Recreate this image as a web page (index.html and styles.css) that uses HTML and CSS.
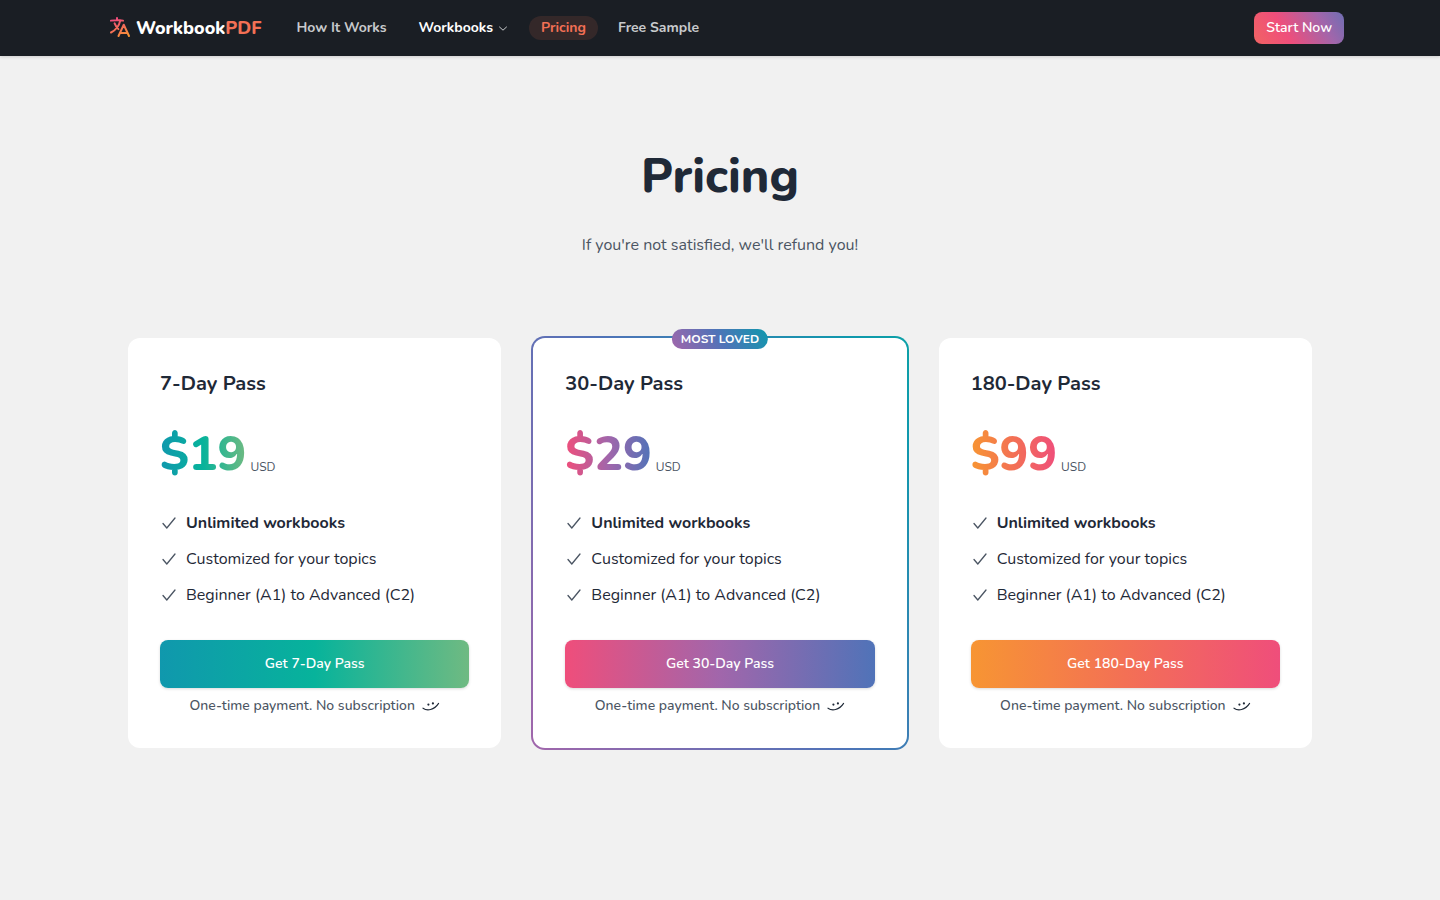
FILE: index.html
```
<!DOCTYPE html>
<html lang="en">
<head>
    <meta charset="UTF-8">
    <meta name="viewport" content="width=device-width, initial-scale=1.0">
    <title>Pricing - WorkbookPDF</title>
    <link rel="stylesheet" href="styles.css">
</head>
<body>
    <!-- shared icons -->
    <svg class="sprite" aria-hidden="true">
        <symbol id="icon-check" viewBox="0 0 18 18">
            <path d="M3 9.5 L6.8 14 L15 4" fill="none" stroke="currentColor" stroke-width="1.3" stroke-linecap="round" stroke-linejoin="round"/>
        </symbol>
        <symbol id="icon-smile" viewBox="0 0 18 12">
            <path d="M1 8.2 C5 11.2 12 10.4 16.6 3.4" fill="none" stroke="currentColor" stroke-width="1.1" stroke-linecap="round"/>
            <circle cx="6.4" cy="4.6" r="1.1" fill="currentColor"/>
            <circle cx="10.9" cy="3.4" r="1.1" fill="currentColor"/>
        </symbol>
    </svg>

    <header class="navbar">
        <div class="navbar-inner">
            <a class="logo" href="#">
                <svg class="logo-icon" viewBox="0 0 24 24" fill="none" stroke="url(#logo-gradient)" stroke-width="2" stroke-linecap="round" stroke-linejoin="round" aria-hidden="true">
                    <defs>
                        <linearGradient id="logo-gradient" gradientUnits="userSpaceOnUse" x1="8" y1="3" x2="16" y2="22">
                            <stop offset="0" stop-color="#ef4e7b"/>
                            <stop offset="0.5" stop-color="#f37055"/>
                            <stop offset="1" stop-color="#f79533"/>
                        </linearGradient>
                    </defs>
                    <path d="M10.5 20l5.25-11.25L21 20m-9-3h7.5M3 4.621a48.474 48.474 0 016-.371m0 0c1.12 0 2.233.038 3.334.114M9 4.25V2m3.334 2.364C11.176 9.658 7.69 14.08 3 16.502m9.334-12.138c.896.061 1.785.147 2.666.257m-4.589 8.495a18.023 18.023 0 01-3.827-5.802"/>
                </svg>
                <span>Workbook<span class="logo-accent">PDF</span></span>
            </a>
            <nav class="nav-links">
                <a class="nav-link" href="#">How It Works</a>
                <button class="nav-link nav-menu" type="button">
                    Workbooks
                    <svg class="chevron" viewBox="0 0 12 12" fill="none" stroke="currentColor" stroke-linecap="round" stroke-linejoin="round" aria-hidden="true">
                        <path d="M2.5 5 L6 8.2 L9.5 5"/>
                    </svg>
                </button>
                <a class="nav-link active" href="#">Pricing</a>
                <a class="nav-link" href="#">Free Sample</a>
            </nav>
            <button class="start-btn" type="button">Start Now</button>
        </div>
    </header>

    <main class="container">
        <div class="intro">
            <h1>Pricing</h1>
            <p>If you're not satisfied, we'll refund you!</p>
        </div>

        <div class="pricing-grid">
            <section class="card green">
                <h2>7-Day Pass</h2>
                <div class="price">
                    <span class="amount">$19</span>
                    <span class="currency">USD</span>
                </div>
                <ul class="features">
                    <li><svg class="check"><use href="#icon-check"/></svg><strong>Unlimited workbooks</strong></li>
                    <li><svg class="check"><use href="#icon-check"/></svg>Customized for your topics</li>
                    <li><svg class="check"><use href="#icon-check"/></svg>Beginner (A1) to Advanced (C2)</li>
                </ul>
                <button class="buy-btn" type="button">Get 7-Day Pass</button>
                <p class="note">One-time payment. No subscription <svg class="smile"><use href="#icon-smile"/></svg></p>
            </section>

            <section class="card purple featured">
                <span class="badge">MOST LOVED</span>
                <h2>30-Day Pass</h2>
                <div class="price">
                    <span class="amount">$29</span>
                    <span class="currency">USD</span>
                </div>
                <ul class="features">
                    <li><svg class="check"><use href="#icon-check"/></svg><strong>Unlimited workbooks</strong></li>
                    <li><svg class="check"><use href="#icon-check"/></svg>Customized for your topics</li>
                    <li><svg class="check"><use href="#icon-check"/></svg>Beginner (A1) to Advanced (C2)</li>
                </ul>
                <button class="buy-btn" type="button">Get 30-Day Pass</button>
                <p class="note">One-time payment. No subscription <svg class="smile"><use href="#icon-smile"/></svg></p>
            </section>

            <section class="card orange">
                <h2>180-Day Pass</h2>
                <div class="price">
                    <span class="amount">$99</span>
                    <span class="currency">USD</span>
                </div>
                <ul class="features">
                    <li><svg class="check"><use href="#icon-check"/></svg><strong>Unlimited workbooks</strong></li>
                    <li><svg class="check"><use href="#icon-check"/></svg>Customized for your topics</li>
                    <li><svg class="check"><use href="#icon-check"/></svg>Beginner (A1) to Advanced (C2)</li>
                </ul>
                <button class="buy-btn" type="button">Get 180-Day Pass</button>
                <p class="note">One-time payment. No subscription <svg class="smile"><use href="#icon-smile"/></svg></p>
            </section>
        </div>
    </main>
</body>
</html>
```
FILE: styles.css
```
* {
    margin: 0;
    padding: 0;
    box-sizing: border-box;
}

body {
    font-family: Nunito, Lato, 'Open Sans', sans-serif;
    font-size: 16px;
    line-height: 24px;
    background: #f1f1f1;
    color: #1f2937;
    min-height: 100vh;
    -webkit-font-smoothing: antialiased;
}

button {
    font-family: inherit;
    border: none;
    cursor: pointer;
}

a {
    text-decoration: none;
}

.sprite {
    display: none;
}

/* navbar */
.navbar {
    background: #1a1e24;
    box-shadow: 0 1px 3px rgba(0, 0, 0, 0.15);
}

.navbar-inner {
    display: flex;
    align-items: center;
    max-width: 1280px;
    min-height: 56px;
    margin: 0 auto;
    padding: 0 16px;
}

.logo {
    display: flex;
    align-items: center;
    gap: 4px;
    padding: 0 12px;
    color: #fff;
    font-size: 18px;
    font-weight: 800;
}

.logo-icon {
    width: 24px;
    height: 24px;
}

.logo-accent {
    color: #f37055;
}

.nav-links {
    display: flex;
    align-items: center;
    gap: 8px;
    margin-left: 11px;
}

.nav-link {
    padding: 0 12px;
    border-radius: 12px;
    color: #c8cacc;
    font-size: 14px;
    line-height: 24px;
    font-weight: 700;
}

.nav-menu {
    display: flex;
    align-items: center;
    gap: 4px;
    background: none;
    color: #fff;
}

.chevron {
    width: 12px;
    height: 12px;
    color: #c8cacc;
}

.nav-link.active {
    background: rgba(243, 112, 85, 0.12);
    color: #f37055;
}

.start-btn {
    margin-left: auto;
    padding: 4px 12px;
    border-radius: 8px;
    background: linear-gradient(60deg, #f37055 -20%, #ef4e7b 35%, #a166ab 75%, #5073b8 115%);
    color: #fff;
    font-size: 14px;
    line-height: 24px;
    font-weight: 600;
}

/* intro */
.container {
    max-width: 1280px;
    margin: 0 auto;
    padding: 96px 48px;
}

.intro {
    text-align: center;
    margin-bottom: 80px;
}

.intro h1 {
    margin-bottom: 32px;
    font-size: 48px;
    line-height: 48px;
    font-weight: 800;
}

.intro p {
    color: #4b5563;
    line-height: 26px;
}

/* cards */
.pricing-grid {
    display: grid;
    grid-template-columns: repeat(3, 1fr);
    gap: 32px;
}

.card {
    position: relative;
    padding: 32px;
    border-radius: 12px;
    background: #fff;
}

.green {
    --gradient: #1098ad, #07b39b, #6fba82;
}

.purple {
    --gradient: #ef4e7b, #a166ab, #5073b8;
}

.orange {
    --gradient: #f79533, #f37055, #ef4e7b;
}

/* gradient frame drawn around the card */
.featured::before {
    content: '';
    position: absolute;
    inset: -2px;
    z-index: -1;
    border-radius: 14px;
    background: linear-gradient(60deg, #a166ab, #5073b8 50%, #1098ad 90%, #07b39b 120%);
}

.badge {
    position: absolute;
    top: -9px;
    left: 50%;
    transform: translateX(-50%);
    padding: 0 9px;
    border-radius: 10px;
    background: linear-gradient(60deg, #a166ab, #5073b8, #1098ad);
    color: #fff;
    font-size: 12px;
    line-height: 20px;
    font-weight: 700;
    white-space: nowrap;
}

.card h2 {
    margin-bottom: 32px;
    font-size: 20px;
    line-height: 28px;
    font-weight: 700;
}

.price {
    display: flex;
    align-items: flex-end;
    gap: 4px;
    margin-bottom: 33px;
}

.amount {
    background: linear-gradient(90deg, var(--gradient));
    -webkit-background-clip: text;
    background-clip: text;
    color: transparent;
    font-size: 48px;
    line-height: 48px;
    font-weight: 800;
}

.currency {
    color: #4b5563;
    font-size: 12px;
    line-height: 22px;
}

.features {
    display: grid;
    gap: 12px;
    margin-bottom: 33px;
    list-style: none;
}

.features li {
    display: flex;
    align-items: center;
    gap: 8px;
}

.features strong {
    font-weight: 700;
}

.check {
    width: 18px;
    height: 18px;
    color: #4b5563;
}

.buy-btn {
    display: block;
    width: 100%;
    margin-bottom: 8px;
    padding: 12px 16px;
    border-radius: 8px;
    background: linear-gradient(90deg, var(--gradient));
    box-shadow: 0 1px 3px rgba(0, 0, 0, 0.15);
    color: #fff;
    font-size: 14px;
    line-height: 24px;
    font-weight: 600;
}

.note {
    display: flex;
    align-items: center;
    justify-content: center;
    gap: 7px;
    color: #4b5563;
    font-size: 14px;
    line-height: 20px;
    font-weight: 500;
}

.smile {
    width: 18px;
    height: 12px;
    color: #1f2937;
}

@media (max-width: 900px) {
    .pricing-grid {
        grid-template-columns: 1fr;
    }

    .navbar-inner {
        flex-wrap: wrap;
    }
}
```
